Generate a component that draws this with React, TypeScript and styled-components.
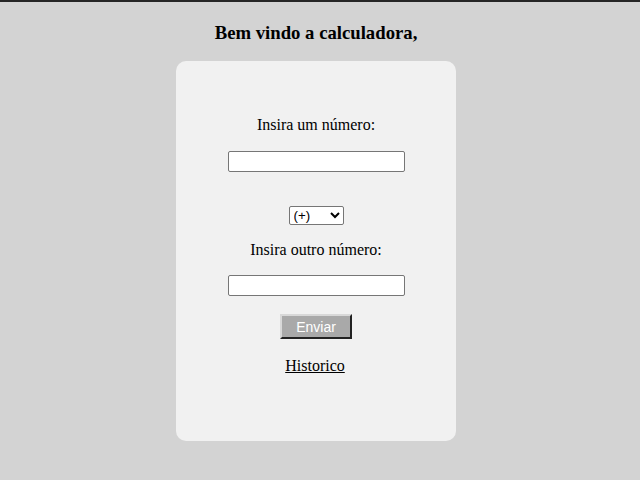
import React from 'react'
import styled, { createGlobalStyle } from 'styled-components'

const GlobalStyle = createGlobalStyle`
    html, body {
        margin: 0;
        padding: 0;
        background: #d3d3d3;
        font-family: "Liberation Serif", "Times New Roman", serif;
        color: #000000;
    }
    body {
        border-top: 2px solid #252525;
        min-height: 478px;
    }
`

export default function App(){
    const [first, setFirst] = React.useState("")
    const [second, setSecond] = React.useState("")
    const [op, setOp] = React.useState("+")

    function handleSubmit(event: React.FormEvent<HTMLFormElement>){
        event.preventDefault()
    }

    return(
        <Page>
            <GlobalStyle/>
            <Title>Bem vindo a calculadora,</Title>
            <Card onSubmit={handleSubmit}>
                <Label>Insira um número:</Label>
                <NumberInput type='text' value={first} onChange={e => setFirst(e.target.value)}/>
                <Operator value={op} onChange={e => setOp(e.target.value)}>
                    <option value="+">(+)</option>
                    <option value="-">(-)</option>
                    <option value="*">(*)</option>
                    <option value="/">(/)</option>
                </Operator>
                <Label second>Insira outro número:</Label>
                <NumberInput type='text' gap={16} value={second} onChange={e => setSecond(e.target.value)}/>
                <SubmitButton type='submit'>Enviar</SubmitButton>
                <HistoryLink href='#'>Historico</HistoryLink>
            </Card>
        </Page>
    )
}

const Page = styled.div`
    width: 632px;
    display: flex;
    flex-direction: column;
    align-items: center;
`

const Title = styled.h3`
    font-size: 18.72px;
    font-weight: bold;
    margin: 20px 0 18px;
    line-height: 21px;
`

const Card = styled.form`
    box-sizing: border-box;
    width: 280px;
    height: 380px;
    background: #f1f1f1;
    border-radius: 10px;
    display: flex;
    flex-direction: column;
    align-items: center;
    padding-top: 55px;
`

const Label = styled.p<{ second?: boolean }>`
    margin: ${p => p.second ? "16px" : "0"} 0 0;
    font-size: 16px;
    line-height: 18px;
`

const NumberInput = styled.input<{ gap?: number }>`
    box-sizing: border-box;
    width: 177px;
    height: 21px;
    margin-top: ${p => p.gap ?? 17}px;
    border: 1px solid #767676;
    border-radius: 2px;
    background: #ffffff;
    padding: 1px 2px;
    font-size: 13.33px;
    font-family: Arial, "Liberation Sans", sans-serif;

    &:focus{
        outline: none;
    }
`

const Operator = styled.select`
    box-sizing: border-box;
    width: 55px;
    height: 19px;
    margin-top: 34px;
    border: 1px solid #767676;
    border-radius: 2px;
    background: #ffffff;
    font-size: 13.33px;
    font-family: Arial, "Liberation Sans", sans-serif;
    color: #000000;
    padding: 0;
`

const SubmitButton = styled.button`
    box-sizing: border-box;
    width: 72px;
    height: 25px;
    margin-top: 18px;
    background: #a9a9a9;
    color: #ffffff;
    border: 2px solid;
    border-color: #d8d8d8 #222222 #222222 #d8d8d8;
    font-family: Arial, "Liberation Sans", sans-serif;
    font-size: 14px;
    padding: 0;
    cursor: pointer;
`

const HistoryLink = styled.a`
    margin-top: 18px;
    margin-right: 2px;
    color: #000000;
    font-size: 16px;
    line-height: 18px;
    text-decoration: underline;
`
